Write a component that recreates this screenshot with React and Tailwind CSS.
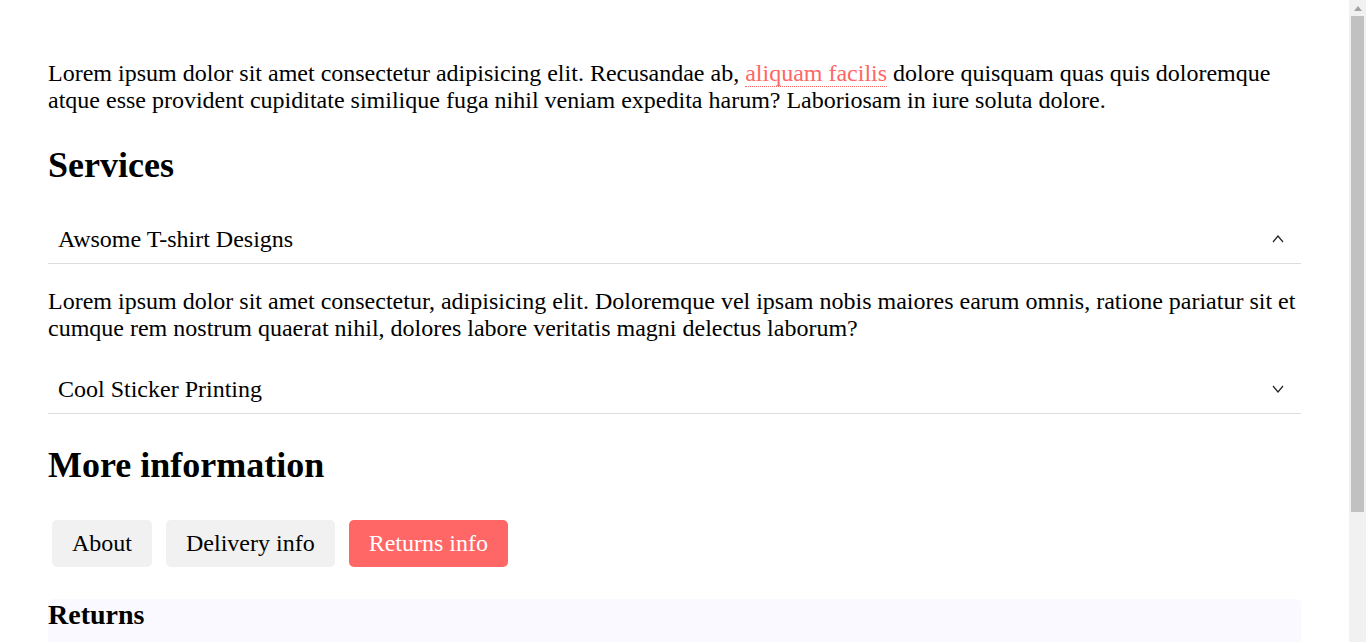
import React, { useState } from 'react';

const services = [
  {
    id: 1,
    title: 'Awsome T-shirt Designs',
    body: 'Lorem ipsum dolor sit amet consectetur, adipisicing elit. Doloremque vel ipsam nobis maiores earum omnis, ratione pariatur sit et cumque rem nostrum quaerat nihil, dolores labore veritatis magni delectus laborum?'
  },
  {
    id: 2,
    title: 'Cool Sticker Printing',
    body: 'Lorem ipsum dolor sit amet consectetur adipisicing elit. Quas, minima! Voluptate aut repellendus fugit dolorum, officiis sequi eius.'
  }
];

const tabs = [
  { id: 'about', label: 'About', title: 'About', text: 'Lorem ipsum dolor sit amet consectetur adipisicing elit. Cum, beatae!' },
  { id: 'delivery', label: 'Delivery info', title: 'Delivery', text: 'Lorem ipsum dolor sit amet consectetur adipisicing elit. Sequi, porro.' },
  {
    id: 'returns',
    label: 'Returns info',
    title: 'Returns',
    text: 'Lorem ipsum dolor sit amet consectetur adipisicing elit. Numquam voluptate nisi eaque reiciendis, sapiente officiis quibusdam aliquid ipsa perferendis, asperiores natus iure.'
  }
];

const Chevron = ({ open }) => (
  <svg width="12" height="10" viewBox="0 0 12 10" className="shrink-0">
    <polyline
      points={open ? '1,8 6,2 11,8' : '1,2 6,8 11,2'}
      fill="none"
      stroke="#222"
      strokeWidth="1.2"
    />
  </svg>
);

// fake classic scrollbar, the page is taller than the window
const Scrollbar = () => (
  <div className="w-[17px] shrink-0 bg-[#f1f1f1] flex flex-col items-center">
    <div className="h-[16px] flex items-center justify-center">
      <svg width="8" height="5" viewBox="0 0 8 5">
        <polygon points="0,5 4,0 8,5" fill="#a3a3a3" />
      </svg>
    </div>
    <div className="w-[13px] h-[496px] bg-[#c1c1c1]" />
  </div>
);

const App = () => {
  const [open, setOpen] = useState(1);
  const [tab, setTab] = useState('returns');
  const current = tabs.find((t) => t.id === tab);

  return (
    <div className="flex h-screen overflow-hidden bg-white">
      <div className="flex-1 min-w-0 overflow-y-auto [scrollbar-width:none] px-12 pt-[36px] pb-12 text-black text-[24px] leading-[normal] font-['Liberation_Serif','Times_New_Roman',serif]">
        <p className="my-6">
          Lorem ipsum dolor sit amet consectetur adipisicing elit. Recusandae ab,{' '}
          <a href="#" className="text-[#ff6666] border-b border-dotted border-[#ff6666]">
            aliquam facilis
          </a>{' '}
          dolore quisquam quas quis doloremque atque esse provident cupiditate similique fuga nihil veniam expedita
          harum? Laboriosam in iure soluta dolore.
        </p>

        <h2 className="text-[36px] font-bold my-[29.88px]">Services</h2>

        {services.map((s) => (
          <div key={s.id}>
            <button
              onClick={() => setOpen(open === s.id ? null : s.id)}
              className="w-full flex items-center justify-between text-left pl-[10px] pr-[17px] py-[10px] border-b border-[#dddddd] cursor-pointer"
            >
              <span>{s.title}</span>
              <Chevron open={open === s.id} />
            </button>
            {open === s.id && <p className="my-6">{s.body}</p>}
          </div>
        ))}

        <h2 className="text-[36px] font-bold my-[29.88px]">More information</h2>

        <div className="flex gap-[6px]">
          {tabs.map((t) => (
            <button
              key={t.id}
              onClick={() => setTab(t.id)}
              className={
                t.id === tab
                  ? 'm-1 px-5 py-[10px] rounded-[5px] bg-[#ff6666] text-white cursor-pointer'
                  : 'm-1 px-5 py-[10px] rounded-[5px] bg-[#f1f1f1] text-black cursor-pointer'
              }
            >
              {t.label}
            </button>
          ))}
        </div>

        <div className="bg-[#f9f9ff] rounded-[5px]">
          <h3 className="text-[28px] font-bold my-7">{current.title}</h3>
          <p className="my-6">{current.text}</p>
        </div>
      </div>
      <Scrollbar />
    </div>
  );
};

export default App;
